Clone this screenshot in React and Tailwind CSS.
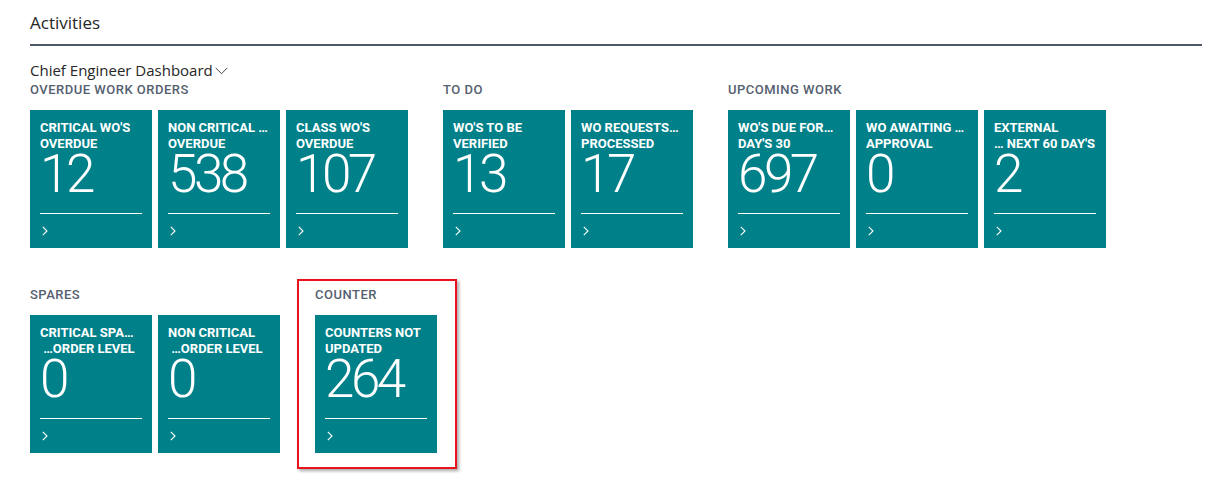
import React from "react";

const groupsTop = [
  {
    label: "Overdue Work Orders",
    tiles: [
      { l1: "CRITICAL WO'S", l2: "OVERDUE", n: "12" },
      { l1: "NON CRITICAL …", l2: "OVERDUE", n: "538" },
      { l1: "CLASS WO'S", l2: "OVERDUE", n: "107" },
    ],
  },
  {
    label: "To Do",
    tiles: [
      { l1: "WO'S TO BE", l2: "VERIFIED", n: "13" },
      { l1: "WO REQUESTS…", l2: "PROCESSED", n: "17" },
    ],
  },
  {
    label: "Upcoming Work",
    tiles: [
      { l1: "WO'S DUE FOR…", l2: "DAY'S 30", n: "697" },
      { l1: "WO AWAITING …", l2: "APPROVAL", n: "0" },
      { l1: "EXTERNAL", l2: "… NEXT 60 DAY'S", n: "2" },
    ],
  },
];

const spares = {
  label: "Spares",
  tiles: [
    { l1: "CRITICAL SPA…", l2: " …ORDER LEVEL", n: "0" },
    { l1: "NON CRITICAL", l2: " …ORDER LEVEL", n: "0" },
  ],
};

const counter = {
  label: "Counter",
  tiles: [{ l1: "COUNTERS NOT", l2: "UPDATED", n: "264" }],
};

const Tile = ({ l1, l2, n }) => (
  <div className="w-[122px] h-[138px] bg-[#00818a] px-[10px] pt-[10px] flex flex-col text-white font-['Roboto',sans-serif]">
    <div className="h-[32px] text-[13px] leading-[16px] font-bold">
      <div className="whitespace-pre overflow-hidden">{l1}</div>
      <div className="whitespace-pre overflow-hidden">{l2}</div>
    </div>
    <div className="h-[44px] text-[53px] leading-[44px] font-light tracking-[-3.5px]">{n}</div>
    <div className="flex-1" />
    <div className="h-px bg-white" />
    <div className="h-[34px] flex items-center pl-[2px]">
      <svg width="6" height="10" viewBox="0 0 6 10" fill="none">
        <path d="M0.8 0.8 L5 5 L0.8 9.2" stroke="white" strokeWidth="1.1" />
      </svg>
    </div>
  </div>
);

const Group = ({ label, tiles }) => (
  <div className="flex flex-col">
    <div className="h-[16px] leading-[16px] text-[13px] font-medium uppercase tracking-[0.5px] text-[#556070] font-['Roboto',sans-serif]">
      {label}
    </div>
    <div className="mt-[12px] flex gap-[6px]">
      {tiles.map((t, i) => (
        <Tile key={i} {...t} />
      ))}
    </div>
  </div>
);

export default function App() {
  return (
    <div className="w-[1212px] h-[483px] bg-white pl-[30px] pr-[10px] pt-[11px] font-['Open_Sans',sans-serif]">
      <h2 className="text-[17px] leading-[24px] text-[#262626]">Activities</h2>
      <div className="mt-[9px] h-[2px] bg-[#4f5868]" />

      <div className="mt-[14px] h-[20px] flex items-center text-[15px] text-[#262626]">
        <span>Chief Engineer Dashboard</span>
        <svg className="ml-[2px] mt-[2px]" width="13" height="8" viewBox="0 0 13 8" fill="none">
          <path d="M0.7 0.9 L6.5 6.7 L12.3 0.9" stroke="#444" strokeWidth="1" />
        </svg>
      </div>

      <div className="mt-[2px] flex gap-[35px]">
        {groupsTop.map((g) => (
          <Group key={g.label} {...g} />
        ))}
      </div>

      <div className="mt-[39px] flex gap-[35px]">
        <Group {...spares} />
        <div className="relative">
          <Group {...counter} />
          {/* highlight frame */}
          <div className="absolute left-[-18px] top-[-8px] w-[160px] h-[190px] border-2 border-[#e8141b] shadow-[2px_2px_3px_rgba(0,0,0,0.35)] pointer-events-none" />
        </div>
      </div>
    </div>
  );
}
